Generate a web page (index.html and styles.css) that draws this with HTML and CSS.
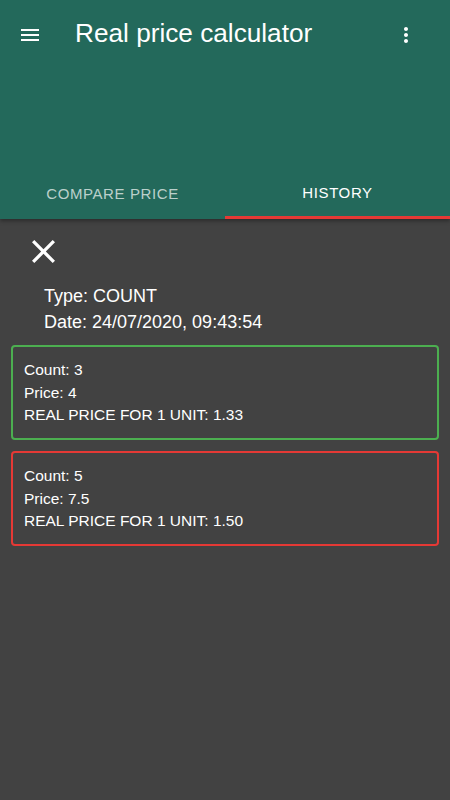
FILE: index.html
```html
<!DOCTYPE html>
<html>
<head>
<meta charset="utf-8">
<link rel="stylesheet" href="styles.css">
</head>
<body>
<header class="appbar">
  <div class="toolbar">
    <svg class="icon menu" viewBox="0 0 24 24" width="24" height="24"><path fill="#fff" d="M3 18h18v-2H3v2zm0-5h18v-2H3v2zm0-7v2h18V6H3z"/></svg>
    <h1 class="title">Real price calculator</h1>
    <svg class="icon more" viewBox="0 0 24 24" width="24" height="24"><path fill="#fff" d="M12 8c1.1 0 2-.9 2-2s-.9-2-2-2-2 .9-2 2 .9 2 2 2zm0 2c-1.1 0-2 .9-2 2s.9 2 2 2 2-.9 2-2-.9-2-2-2zm0 6c-1.1 0-2 .9-2 2s.9 2 2 2 2-.9 2-2-.9-2-2-2z"/></svg>
  </div>
  <nav class="tabs">
    <div class="tab">COMPARE PRICE</div>
    <div class="tab active">HISTORY</div>
  </nav>
</header>
<main class="content">
  <svg class="close" viewBox="5 5 14 14" width="23" height="23"><path fill="#fff" d="M19 6.41L17.59 5 12 10.59 6.41 5 5 6.41 10.59 12 5 17.59 6.41 19 12 13.41 17.59 19 19 17.59 13.41 12z"/></svg>
  <div class="meta">
    <p>Type: COUNT</p>
    <p>Date: 24/07/2020, 09:43:54</p>
  </div>
  <div class="card good">
    <p>Count: 3</p>
    <p>Price: 4</p>
    <p>REAL PRICE FOR 1 UNIT: 1.33</p>
  </div>
  <div class="card bad">
    <p>Count: 5</p>
    <p>Price: 7.5</p>
    <p>REAL PRICE FOR 1 UNIT: 1.50</p>
  </div>
</main>
</body>
</html>
```
FILE: styles.css
```css
* { box-sizing: border-box; }
html, body { margin: 0; padding: 0; }
body {
  width: 450px;
  height: 800px;
  background: #424242;
  font-family: "Liberation Sans", Arial, sans-serif;
  color: #fff;
  overflow: hidden;
}
.appbar {
  background: #23695b;
  height: 219px;
  display: flex;
  flex-direction: column;
  justify-content: space-between;
  box-shadow: 0 2px 4px rgba(0,0,0,0.35);
  position: relative;
  z-index: 1;
}
.toolbar {
  display: flex;
  align-items: center;
  height: 70px;
  padding: 0 20px 0 18px;
}
.icon { display: block; flex: none; }
.title {
  flex: 1;
  margin: 0 0 0 33px;
  font-size: 26.2px;
  font-weight: 400;
  letter-spacing: 0;
  line-height: 30px;
  position: relative;
  top: -2px;
}
.more { margin-right: 12px; }
.tabs {
  display: flex;
  height: 50px;
}
.tab {
  flex: 1;
  display: flex;
  align-items: center;
  justify-content: center;
  font-size: 15px;
  letter-spacing: 0.6px;
  color: rgba(255,255,255,0.7);
  padding-bottom: 2px;
}
.tab.active {
  color: #fff;
  border-bottom: 3px solid #e53935;
  padding-bottom: 0;
}
.content {
  padding: 21px 11px 0;
  display: flex;
  flex-direction: column;
}
.close {
  display: block;
  margin-left: 21px;
}
.meta {
  padding: 20px 0 0 33px;
  font-size: 18px;
}
.meta p {
  margin: 0;
  line-height: 26px;
}
.card {
  margin-top: 10px;
  border: 2px solid #4caf50;
  border-radius: 4px;
  padding: 12px 11px 11px;
  font-size: 15.5px;
  height: 95px;
}
.card + .card { margin-top: 11px; }
.card.bad { border-color: #e53935; }
.card p {
  margin: 0;
  line-height: 22.5px;
}
```
